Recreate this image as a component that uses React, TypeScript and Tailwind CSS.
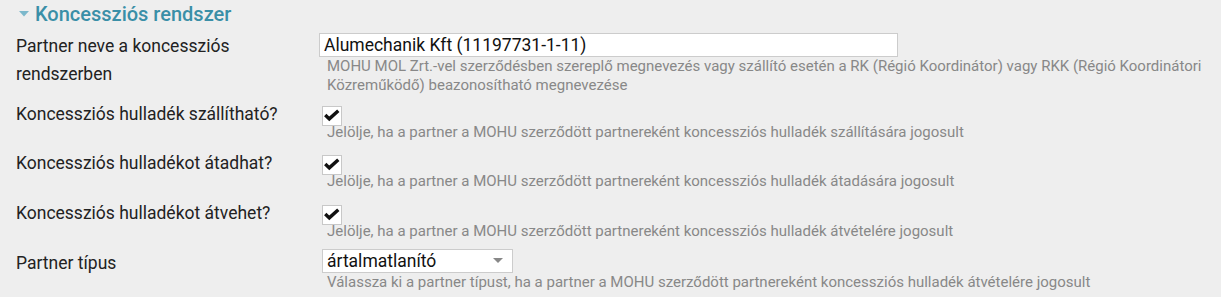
const rows = [
  {
    label: "Koncessziós hulladék szállítható?",
    help: "Jelölje, ha a partner a MOHU szerződött partnereként koncessziós hulladék szállítására jogosult",
  },
  {
    label: "Koncessziós hulladékot átadhat?",
    help: "Jelölje, ha a partner a MOHU szerződött partnereként koncessziós hulladék átadására jogosult",
  },
  {
    label: "Koncessziós hulladékot átvehet?",
    help: "Jelölje, ha a partner a MOHU szerződött partnereként koncessziós hulladék átvételére jogosult",
  },
];

function Check() {
  return (
    <div className="mt-[6px] mb-[-3px] ml-[3px] flex h-5 w-5 items-center justify-center border border-[#c8c8c8] bg-white">
      <svg width="20" height="20" viewBox="0 0 20 20">
        <polyline
          points="2.5,9 7,13.2 17,4.2"
          fill="none"
          stroke="#111"
          strokeWidth="3.8"
          strokeLinecap="butt"
          strokeLinejoin="miter"
        />
      </svg>
    </div>
  );
}

function Help({ children }: { children: React.ReactNode }) {
  return (
    <p className="pl-2 text-[15px] leading-[19px] text-[#888]">{children}</p>
  );
}

export default function App() {
  return (
    <div
      className="min-h-[297px] w-full bg-[#eeeeee] pr-3 pl-4 text-[#222]"
      style={{ fontFamily: "Roboto, 'Noto Sans', sans-serif" }}
    >
      <div className="flex h-7 items-center gap-[6px] pl-[3px]">
        <svg width="10" height="6" viewBox="0 0 10 6" className="mt-[-1px]">
          <polygon points="0,0 10,0 5,5.5" fill="#7cb8cb" />
        </svg>
        <h2 className="text-[20px] font-medium leading-7 text-[#3a8fa7]">
          Koncessziós rendszer
        </h2>
      </div>

      <div className="mt-1 mb-[5px] flex">
        <div className="w-[303px] shrink-0 pr-4 text-[17.5px] leading-7">
          Partner neve a koncessziós rendszerben
        </div>
        <div className="flex-1">
          <div className="mt-px h-6 w-[579px] border border-[#cccccc] bg-white pl-1 text-[17.5px] leading-[22px] text-[#111]">
            Alumechanik Kft (11197731-1-11)
          </div>
          <Help>
            MOHU MOL Zrt.-vel szerződésben szereplő megnevezés vagy szállító
            esetén a RK (Régió Koordinátor) vagy RKK (Régió Koordinátori
            Közreműködő) beazonosítható megnevezése
          </Help>
        </div>
      </div>

      {rows.map((row, i) => (
        <div className={i === 0 ? "mb-[7px] flex" : "mb-2 flex"} key={row.label}>
          <div className="w-[303px] shrink-0 pr-4 text-[17.5px] leading-7">
            {row.label}
          </div>
          <div className="flex-1">
            <Check />
            <Help>{row.help}</Help>
          </div>
        </div>
      ))}

      <div className="flex">
        <div className="w-[303px] shrink-0 pr-4 text-[17.5px] leading-7">
          Partner típus
        </div>
        <div className="flex-1">
          <div className="ml-[3px] flex h-6 w-[191px] items-center justify-between border border-[#cccccc] bg-white pr-[9px] pl-1 text-[17.5px] text-[#111]">
            <span>ártalmatlanító</span>
            <svg width="10" height="6" viewBox="0 0 10 6">
              <polygon points="0,0 10,0 5,5" fill="#888" />
            </svg>
          </div>
          <Help>
            Válassza ki a partner típust, ha a partner a MOHU szerződött
            partnereként koncessziós hulladék átvételére jogosult
          </Help>
        </div>
      </div>
    </div>
  );
}
